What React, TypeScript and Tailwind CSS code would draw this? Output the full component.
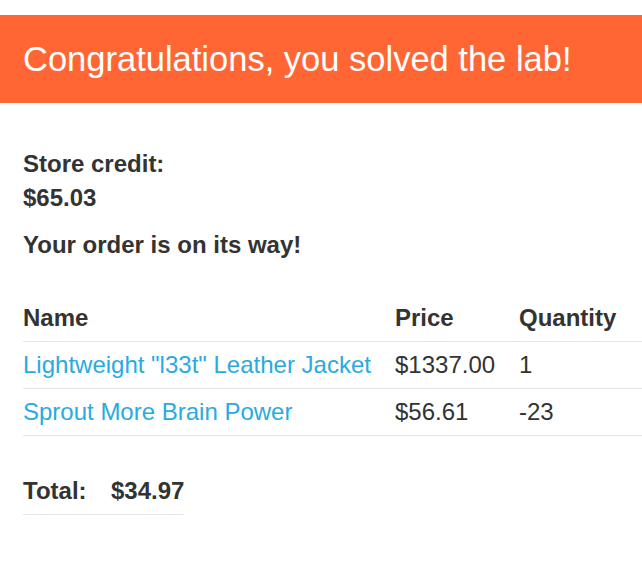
const items = [
  { name: 'Lightweight "l33t" Leather Jacket', price: "$1337.00", qty: "1" },
  { name: "Sprout More Brain Power", price: "$56.61", qty: "-23" },
];

export default function App() {
  return (
    <div className="min-h-screen bg-white font-['Liberation_Sans',Arial,sans-serif] text-[#333332]">
      <div className="h-[15px]" />
      {/* Lab solved banner */}
      <div className="flex h-[88px] items-center bg-[#ff6633] px-[23px]">
        <h4 className="text-[34.5px] leading-none text-white">Congratulations, you solved the lab!</h4>
      </div>

      <div className="pl-[23px] pt-[44px] text-[24px]">
        <p className="font-bold leading-[33.6px]">
          Store credit:
          <br />
          $65.03
        </p>
        <p className="mt-[14px] font-bold leading-[33.6px]">Your order is on its way!</p>

        <table className="mt-[33px] w-full border-collapse">
          <thead>
            <tr className="border-b border-[#e6e6e6]">
              <th className="w-[372px] py-[8px] text-left font-bold leading-[30px]">Name</th>
              <th className="w-[124px] py-[8px] text-left font-bold leading-[30px]">Price</th>
              <th className="py-[8px] text-left font-bold leading-[30px]">Quantity</th>
            </tr>
          </thead>
          <tbody>
            {items.map((it) => (
              <tr key={it.name} className="border-b border-[#e6e6e6]">
                <td className="py-[8px] leading-[30px]">
                  <a className="text-[#29abe0]">{it.name}</a>
                </td>
                <td className="py-[8px] leading-[30px]">{it.price}</td>
                <td className="py-[8px] leading-[30px]">{it.qty}</td>
              </tr>
            ))}
          </tbody>
        </table>

        <table className="mt-[32px] border-collapse font-bold">
          <tbody>
            <tr className="border-b border-[#e6e6e6]">
              <th className="w-[88px] py-[8px] text-left leading-[30px]">Total:</th>
              <th className="py-[8px] text-left leading-[30px]">$34.97</th>
            </tr>
          </tbody>
        </table>
      </div>
    </div>
  );
}
